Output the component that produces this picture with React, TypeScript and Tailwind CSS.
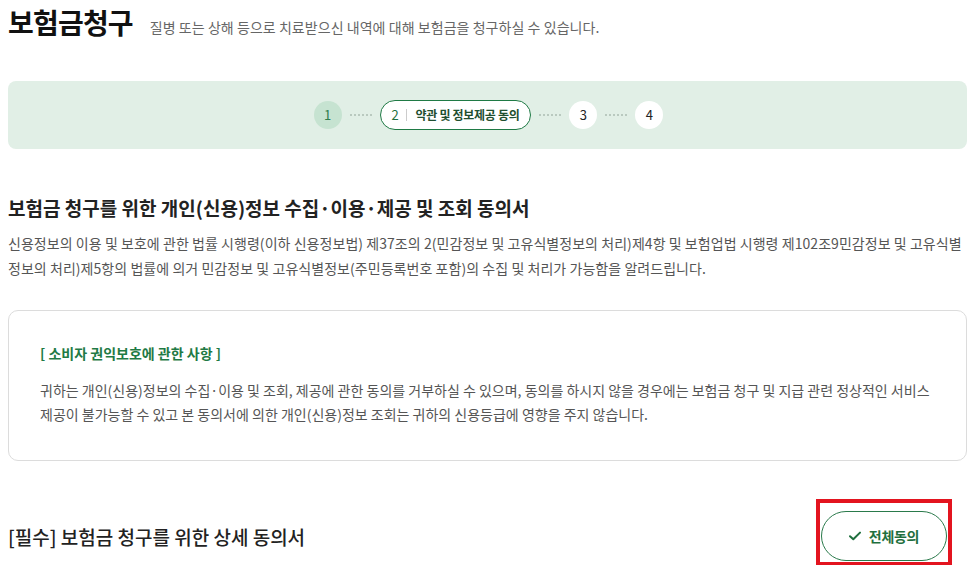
import React from "react";

const font = { fontFamily: '"Noto Sans CJK KR", "Noto Sans", sans-serif' };

function Dots() {
  return <div className="w-[22px] border-t-2 border-dotted border-[#b9c9bf] mx-[8px]" />;
}

export default function App() {
  return (
    <div className="w-[972px] h-[565px] bg-white overflow-hidden relative text-[#222]" style={font}>
      <div className="pl-[8px] pr-[5px]">
        <div className="flex items-end pt-[2px] h-[40px]">
          <h1 className="text-[28px] font-bold tracking-[-0.8px] leading-[36px] text-[#111]">보험금청구</h1>
          <p className="ml-[17px] mb-[3px] text-[14px] text-[#666] tracking-[0.05px] leading-[20px]">
            질병 또는 상해 등으로 치료받으신 내역에 대해 보험금을 청구하실 수 있습니다.
          </p>
        </div>

        <div className="mt-[41px] h-[68px] rounded-[8px] bg-[#e1efe6] flex items-center justify-center">
          <div className="flex items-center ml-[2px]">
            <div className="w-[28px] h-[28px] rounded-full bg-[#c6e3d1] text-[#2e7d4c] text-[13px] flex items-center justify-center">1</div>
            <Dots />
            <div className="h-[30px] px-[11px] rounded-full border-[1.5px] border-[#1f7a45] bg-white flex items-center text-[12px] tracking-[-0.3px]">
              <span className="text-[#1f6f3e] text-[13px]">2</span>
              <span className="mx-[8px] w-px h-[12px] bg-[#ccc]" />
              <span className="font-bold text-[#1f4f30]">약관 및 정보제공 동의</span>
            </div>
            <Dots />
            <div className="w-[28px] h-[28px] rounded-full bg-white text-[#222] text-[13px] flex items-center justify-center">3</div>
            <Dots />
            <div className="w-[28px] h-[28px] rounded-full bg-white text-[#222] text-[13px] flex items-center justify-center">4</div>
          </div>
        </div>

        <h2 className="mt-[45px] text-[19px] font-bold tracking-[0px] leading-[28px] text-[#222]">
          보험금 청구를 위한 개인(신용)정보 수집·이용·제공 및 조회 동의서
        </h2>
        <p className="mt-[9px] text-[14px] text-[#555] tracking-[0.05px] leading-[25px] whitespace-nowrap">
          신용정보의 이용 및 보호에 관한 법률 시행령(이하 신용정보법) 제37조의 2(민감정보 및 고유식별정보의 처리)제4항 및 보험업법 시행령 제102조9민감정보 및 고유식별
          <br />
          정보의 처리)제5항의 법률에 의거 민감정보 및 고유식별정보(주민등록번호 포함)의 수집 및 처리가 가능함을 알려드립니다.
        </p>

        <div className="mt-[29px] h-[151px] rounded-[10px] border border-[#dcdcdc] pl-[31px] pt-[31px]">
          <p className="text-[14px] font-bold text-[#1f7a45] tracking-[0px] leading-[22px]">[ 소비자 권익보호에 관한 사항 ]</p>
          <p className="mt-[14px] text-[14px] text-[#555] tracking-[0px] leading-[24px] whitespace-nowrap">
            귀하는 개인(신용)정보의 수집·이용 및 조회, 제공에 관한 동의를 거부하실 수 있으며, 동의를 하시지 않을 경우에는 보험금 청구 및 지급 관련 정상적인 서비스
            <br />
            제공이 불가능할 수 있고 본 동의서에 의한 개인(신용)정보 조회는 귀하의 신용등급에 영향을 주지 않습니다.
          </p>
        </div>

        <div className="mt-[38px] flex items-center justify-between">
          <h3 className="text-[19px] font-medium tracking-[0px] leading-[28px] text-[#222] mt-[8px]">
            [필수] 보험금 청구를 위한 상세 동의서
          </h3>
          <div className="mr-[15px] border-[4px] border-[#e3141f] px-[1px] pt-[8px] pb-[1px]">
            <button className="w-[126px] h-[50px] rounded-full border border-[#2a7a4b] bg-white flex items-center justify-center gap-[8px] text-[#1f6f3e] text-[14px] font-bold tracking-[-0.3px]">
              <svg width="12" height="10" viewBox="0 0 12 10" fill="none">
                <path d="M1 5.2 L4.3 8.3 L11 1.6" stroke="#1f6f3e" strokeWidth="2" strokeLinecap="round" strokeLinejoin="round" />
              </svg>
              전체동의
            </button>
          </div>
        </div>
      </div>
    </div>
  );
}
